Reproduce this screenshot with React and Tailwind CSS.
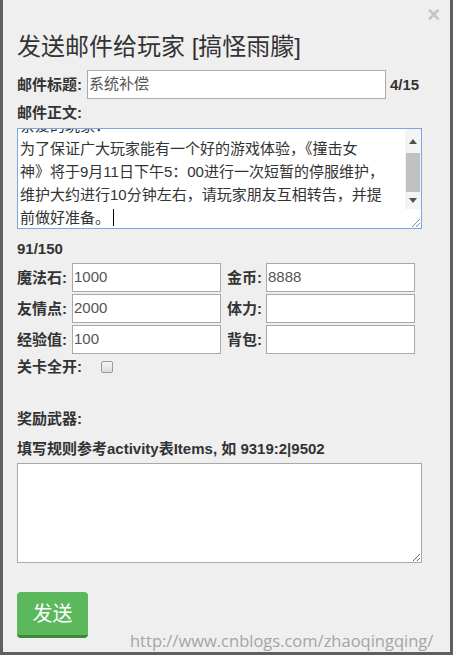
import React from "react";

const F = { fontFamily: '"Liberation Sans", "Noto Sans CJK SC", sans-serif' };

function Label({ children, className = "" }) {
  return (
    <span className={"font-bold text-[15px] leading-[20px] text-[#333] " + className}>{children}</span>
  );
}

function Field({ value }) {
  return (
    <div className="w-[149px] h-[29px] bg-white border border-[#a9a9a9] flex items-center pl-[1px] text-[15px] text-[#555]">
      {value}
    </div>
  );
}

export default function App() {
  return (
    <div className="w-[455px] h-[657px] bg-white overflow-hidden" style={F}>
      <div className="relative w-[453px] h-[655px] bg-[#efefef] border-l-[3px] border-r-[3px] border-b-[3px] border-[#5f5f5f] pt-[5px] pl-[14px] pr-[10px] flex flex-col">
        <div className="h-[20px] flex justify-end">
          <span className="text-[22px] leading-[20px] font-bold text-[#c4c4c4]">×</span>
        </div>
        <div className="mt-[7px] h-[30px] text-[24px] leading-[30px] text-[#333]">发送邮件给玩家 [搞怪雨朦]</div>

        <div className="mt-[8px] flex items-center h-[29px]">
          <Label>邮件标题:</Label>
          <div className="ml-[5px] w-[299px] h-[29px] bg-white border border-[#a9a9a9] flex items-center pl-[1px] text-[15px] text-[#555]">
            系统补偿
          </div>
          <Label className="ml-[4px]">4/15</Label>
        </div>

        <div className="mt-[2px] h-[20px]"><Label>邮件正文:</Label></div>

        <div className="mt-[7px] w-[405px] h-[101px] bg-white border border-[#7aa7de] flex overflow-hidden">
          <div className="flex-1 overflow-hidden pl-[2px] text-[15px] leading-[23px] text-[#333]">
            <div className="-mt-[15px]">
              <div>亲爱的玩家：</div>
              <div>为了保证广大玩家能有一个好的游戏体验，《撞击女</div>
              <div>神》将于9月11日下午5：00进行一次短暂的停服维护，</div>
              <div>维护大约进行10分钟左右，请玩家朋友互相转告，并提</div>
              <div className="flex items-center">前做好准备。<span className="ml-[3px] w-[1px] h-[17px] bg-black" /></div>
            </div>
          </div>
          <div className="w-[16px] flex flex-col bg-[#f4f4f4]">
            <div className="h-[24px] flex items-center justify-center">
              <svg width="8" height="5" viewBox="0 0 8 5"><path d="M0 5 L4 0 L8 5 Z" fill="#505050" /></svg>
            </div>
            <div className="mx-[1px] h-[39px] bg-[#c1c1c1]" />
            <div className="h-[17px] flex items-center justify-center">
              <svg width="8" height="5" viewBox="0 0 8 5"><path d="M0 0 L4 5 L8 0 Z" fill="#505050" /></svg>
            </div>
            <div className="flex-1 bg-white flex items-end justify-end pr-[1px] pb-[1px]">
              <svg width="9" height="9" viewBox="0 0 9 9">
                <path d="M1 9 L9 1 M5 9 L9 5" stroke="#8a8a8a" strokeWidth="1" />
              </svg>
            </div>
          </div>
        </div>

        <div className="mt-[8px] h-[20px]"><Label>91/150</Label></div>

        <div className="mt-[6px] flex flex-col gap-[2px]">
          {[
            ["魔法石:", "1000", "金币:", "8888"],
            ["友情点:", "2000", "体力:", ""],
            ["经验值:", "100", "背包:", ""],
          ].map((r, i) => (
            <div key={i} className="flex items-center h-[29px]">
              <Label className="w-[55px]">{r[0]}</Label>
              <Field value={r[1]} />
              <Label className="ml-[6px] w-[39px]">{r[2]}</Label>
              <Field value={r[3]} />
            </div>
          ))}
        </div>

        <div className="mt-[3px] h-[20px] flex items-center">
          <Label>关卡全开:</Label>
          <span className="ml-[19px] w-[12px] h-[12px] rounded-[2px] border border-[#9a9a9a] bg-gradient-to-b from-[#f6f6f6] to-[#dcdcdc]" />
        </div>

        <div className="mt-[30px] h-[20px]"><Label>奖励武器:</Label></div>
        <div className="mt-[10px] h-[20px]"><Label>填写规则参考activity表Items, 如 9319:2|9502</Label></div>

        <textarea
          readOnly
          className="mt-[6px] w-[405px] h-[100px] bg-white border border-[#a9a9a9] outline-none"
        />

        <button className="mt-[29px] w-[71px] h-[46px] rounded-[4px] bg-[#5cb85c] border-b-[3px] border-[#3c873c] text-white text-[20px] leading-[24px]">
          发送
        </button>

        <div className="absolute left-[127px] top-[631px] text-[16.5px] leading-[20px] text-[#a5a5a5]" style={{ fontFamily: '"Open Sans", "Liberation Sans", sans-serif' }}>
          http://www.cnblogs.com/zhaoqingqing/
        </div>
      </div>
    </div>
  );
}
